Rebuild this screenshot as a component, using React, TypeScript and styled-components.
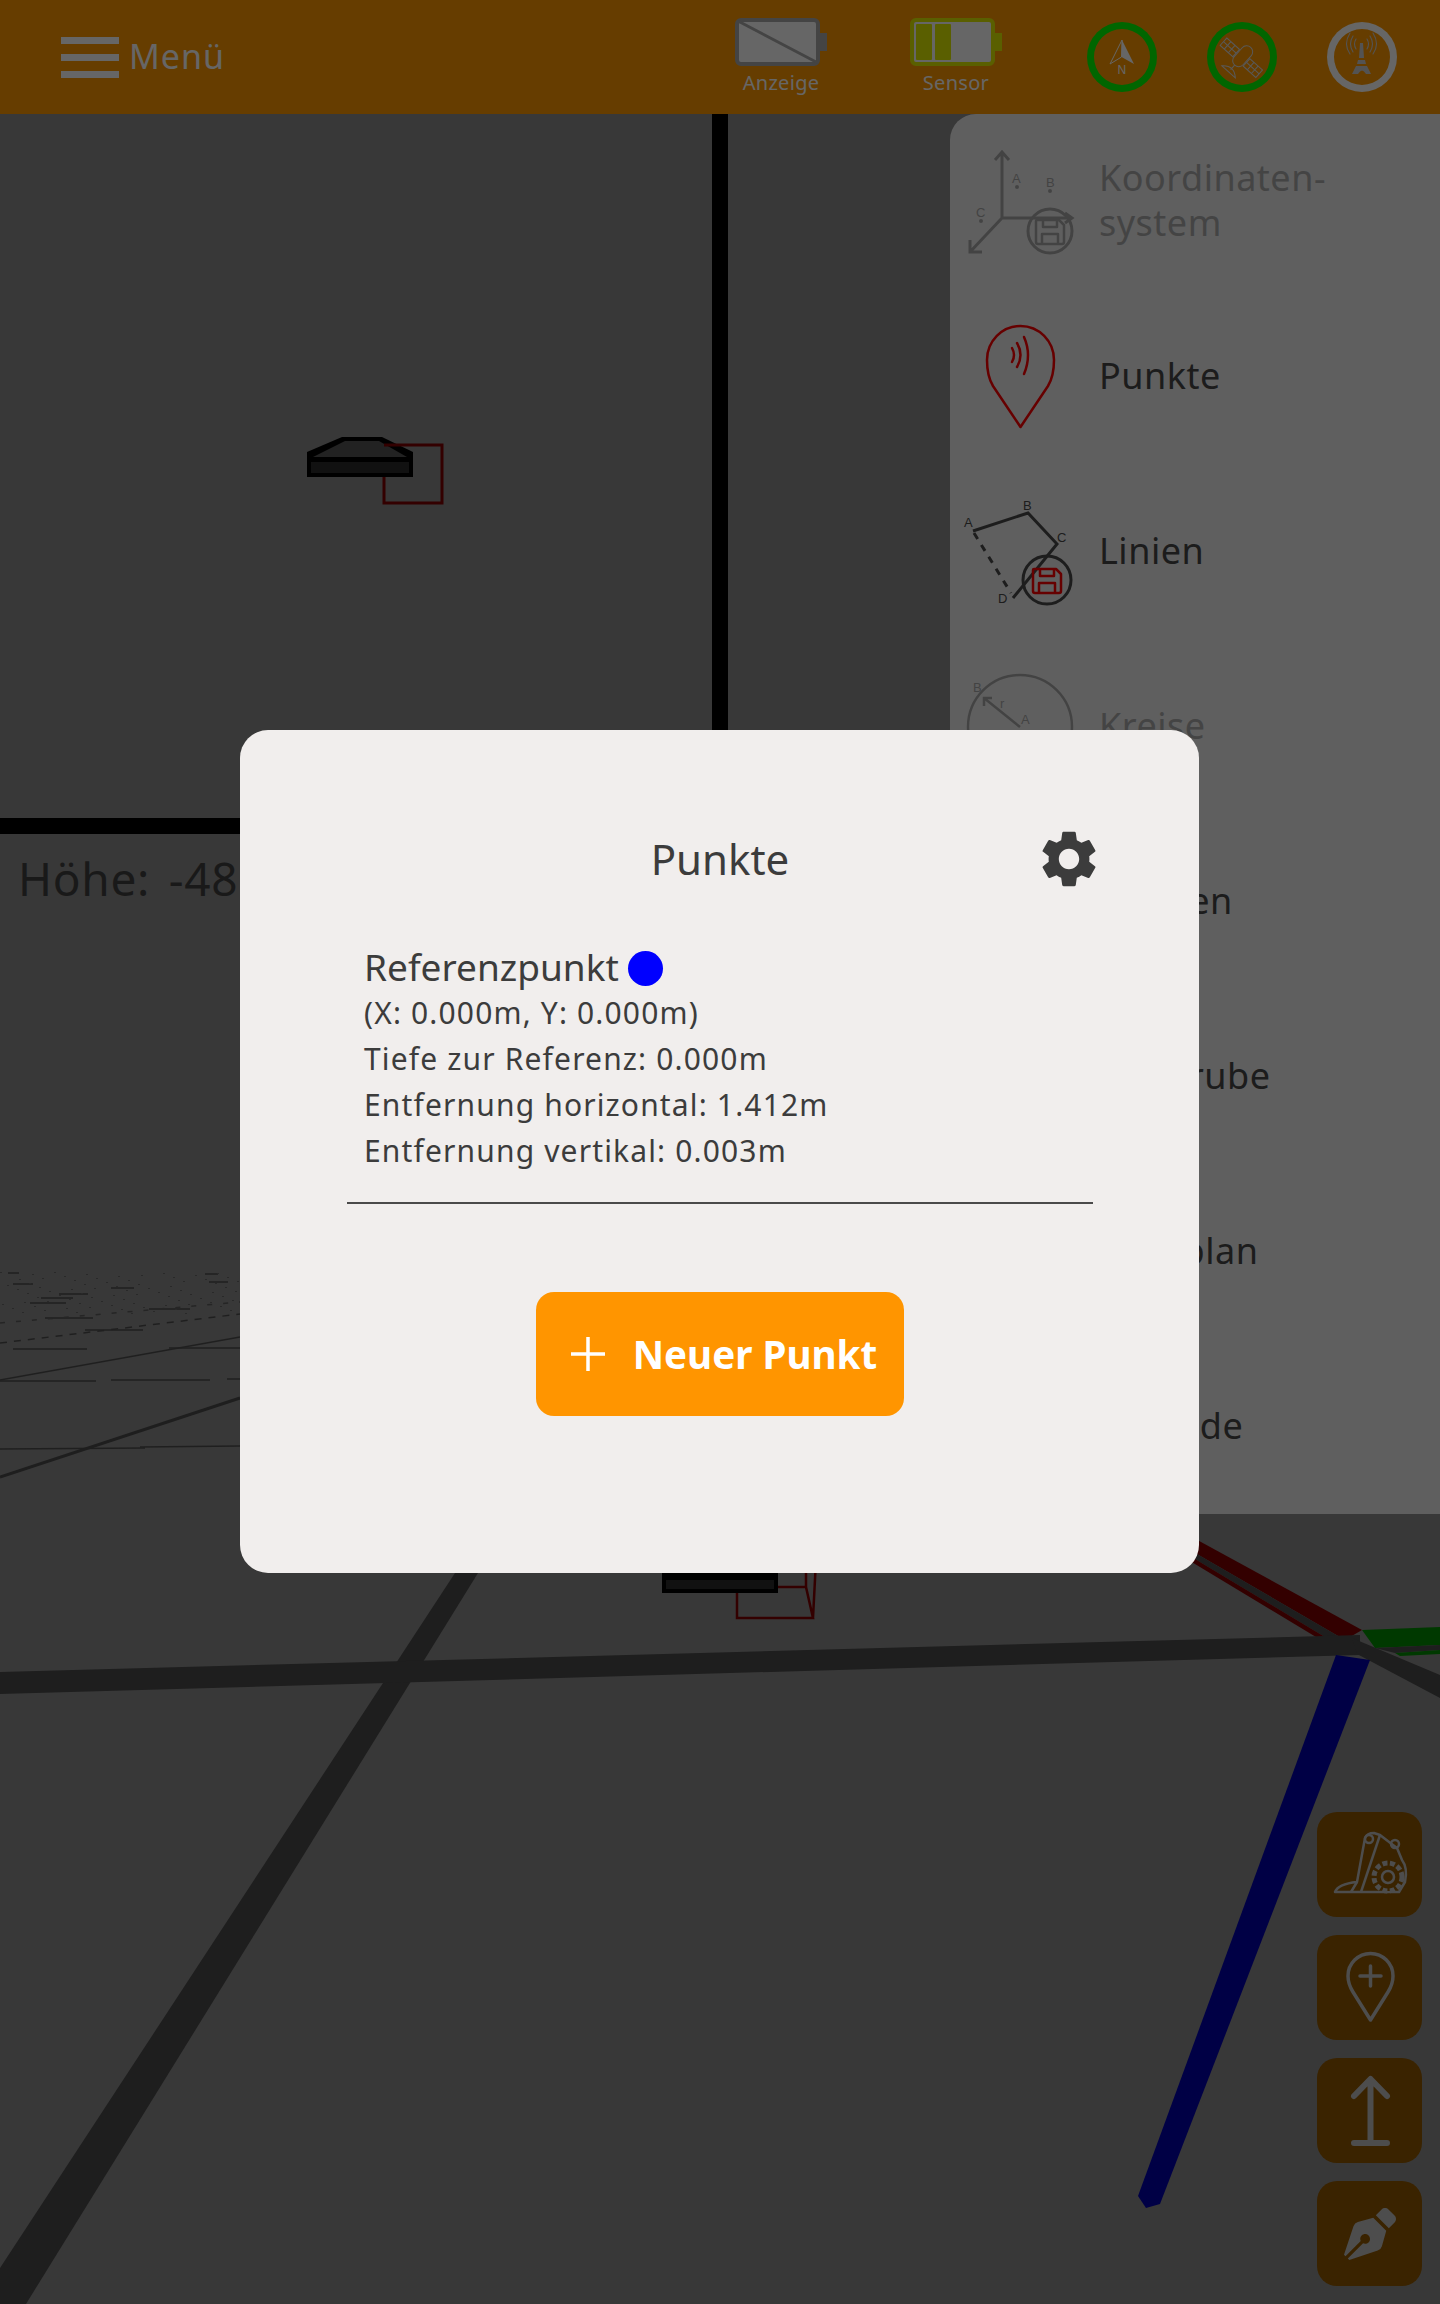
import React from 'react';
import styled, { createGlobalStyle } from 'styled-components';
import { FaPenNib } from 'react-icons/fa';
import { MdSettings } from 'react-icons/md';

const FONT = '"Noto Sans", "Open Sans", sans-serif';

const GlobalStyle = createGlobalStyle`
  html, body {
    margin: 0;
    padding: 0;
    background: #8c8c8c;
    font-family: ${FONT};
  }
  * {
    box-sizing: border-box;
  }
`;

// grid lines of the 3d view, given as x1, y1, x2, y2
const GRID_SEGMENTS = [
  [13, 1349, 87, 1349], [0, 1381, 96, 1381], [111, 1380, 210, 1380], [227, 1379, 240, 1379],
  [85, 1330, 143, 1330], [45, 1318, 93, 1318], [149, 1309, 190, 1309], [169, 1348, 240, 1348],
  [0, 1449, 145, 1448], [140, 1447, 240, 1446], [30, 1303, 66, 1303], [41, 1298, 73, 1298],
  [59, 1294, 88, 1294], [111, 1288, 134, 1288], [13, 1284, 33, 1284], [209, 1282, 228, 1282],
  [205, 1274, 218, 1274], [8, 1273, 19, 1273],
];

const GRID_DOTS = Array.from({ length: 80 }, (_, i) => ({
  x: (i * 47) % 240,
  y: 1272 + ((i * 29) % 42),
}));

const Scene = () => (
  <SceneSvg viewBox="0 0 1440 2304">
    <rect x="712" y="114" width="16" height="700" fill="#000" />
    <rect x="0" y="818" width="728" height="16" fill="#000" />

    <polygon points="342,437 382,437 413,452 413,477 307,477 307,452" fill="#000" />
    <polygon points="345,441 379,441 407,457 313,457" fill="#555" />
    <rect x="311" y="462" width="98" height="11" fill="#2b2b2b" />
    <path d="M384 445 H442 V503 H384 V477" fill="none" stroke="#800000" strokeWidth="3" />

    {GRID_SEGMENTS.map(([x1, y1, x2, y2], i) => (
      <line key={i} x1={x1} y1={y1} x2={x2} y2={y2} stroke="#4f4f4f" strokeWidth="1.5" />
    ))}
    {GRID_DOTS.map((dot, i) => (
      <rect key={i} x={dot.x} y={dot.y} width="2" height="1" fill="#666" />
    ))}
    <line x1="0" y1="1323" x2="240" y2="1302" stroke="#5c5c5c" strokeWidth="1.5" strokeDasharray="5 11" />
    <line x1="0" y1="1343" x2="240" y2="1314" stroke="#4f4f4f" strokeWidth="1.5" strokeDasharray="7 7" />
    <line x1="0" y1="1380" x2="240" y2="1337" stroke="#4f4f4f" strokeWidth="1.5" />
    <line x1="0" y1="1477" x2="240" y2="1398" stroke="#4b4b4b" strokeWidth="3" />

    <polygon points="455,1573 478,1573 26,2304 0,2304 0,2268" fill="#4b4b4b" />

    <polygon points="1190,1536 1362,1630 1345,1640 1190,1550" fill="#800000" />
    <polygon points="1190,1550 1345,1640 1330,1640 1190,1556" fill="#4b4b4b" />
    <polygon points="1190,1556 1330,1640 1321,1640 1190,1561" fill="#800000" />
    <polygon points="1362,1630 1440,1627 1440,1645 1375,1648" fill="#009000" />
    <polygon points="1375,1648 1440,1645 1440,1650 1395,1653" fill="#4b4b4b" />
    <polygon points="1395,1653 1440,1650 1440,1654 1400,1656" fill="#009000" />
    <polygon points="0,1672 1360,1635 1360,1655 0,1694" fill="#4b4b4b" />
    <polygon points="1352,1638 1440,1675 1440,1698 1357,1654" fill="#4b4b4b" />
    <polygon points="1336,1655 1370,1660 1160,2204 1146,2208 1138,2196" fill="#0000ac" />

    <rect x="662" y="1560" width="116" height="33" fill="#000" />
    <rect x="666" y="1580" width="108" height="9" fill="#2b2b2b" />
    <path d="M737 1593 V1618 H813 L806 1587 V1560 M813 1618 L816 1560 M778 1587 H806" fill="none" stroke="#800000" strokeWidth="2.5" />
  </SceneSvg>
);

const Floppy = ({ x, y, color }: { x: number; y: number; color: string }) => (
  <g transform={`translate(${x} ${y})`} fill="none" stroke={color} strokeWidth="2.5" strokeLinejoin="round">
    <path d="M-13 -11 H9 L14 -6 V11 Q14 13 12 13 H-12 Q-14 13 -14 11 V-10 Q-14 -11 -13 -11 Z" />
    <path d="M-7 -11 V-4 H7 V-11" />
    <path d="M-8 13 V3 H8 V13" />
  </g>
);

const AxisIcon = () => (
  <IconSvg viewBox="0 0 120 130">
    <g fill="none" stroke="#a8a8a8" strokeWidth="3">
      <path d="M42 15 V81 H112 M35 23 L42 15 L49 23 M105 76 L112 81 L105 86 M42 81 L10 115 M10 103 V115 H22" />
      <ellipse cx="90" cy="94" rx="22" ry="22" />
    </g>
    <Floppy x={90} y={94} color="#a8a8a8" />
    <IconText x="52" y="46" fill="#a8a8a8">A</IconText>
    <IconText x="86" y="50" fill="#a8a8a8">B</IconText>
    <IconText x="16" y="80" fill="#a8a8a8">C</IconText>
    <circle cx="57" cy="50" r="2" fill="#a8a8a8" />
    <circle cx="90" cy="54" r="2" fill="#a8a8a8" />
    <circle cx="21" cy="84" r="2" fill="#a8a8a8" />
  </IconSvg>
);

const PointIcon = () => (
  <IconSvg viewBox="0 0 120 130">
    <g fill="none" stroke="#ff0000" strokeWidth="2.5" strokeLinecap="round">
      <path d="M60.5 115 L33 74 Q27 64 27 48 A33.5 34 0 0 1 94 48 Q94 64 88 74 Z" strokeLinejoin="round" />
      <path d="M52 36 Q56 43 52 50" />
      <path d="M57 31 Q64 43 57 55" />
      <path d="M64 25 Q72 43 64 62" />
    </g>
  </IconSvg>
);

const LineIcon = () => (
  <IconSvg viewBox="0 0 120 130">
    <g fill="none" stroke="#4a4a4a" strokeWidth="3">
      <path d="M13 44 L68 26 L97 57 L53 111" />
      <path d="M14 46 L51 106" strokeDasharray="7 7" />
      <ellipse cx="87" cy="93" rx="24" ry="24" />
    </g>
    <Floppy x={87} y={93} color="#ff0000" />
    <IconText x="4" y="40" fill="#4a4a4a">A</IconText>
    <IconText x="63" y="23" fill="#4a4a4a">B</IconText>
    <IconText x="97" y="55" fill="#4a4a4a">C</IconText>
    <IconText x="38" y="116" fill="#4a4a4a">D</IconText>
  </IconSvg>
);

const CircleIcon = () => (
  <IconSvg viewBox="0 0 120 130">
    <g fill="none" stroke="#a8a8a8" strokeWidth="2.5">
      <circle cx="60" cy="65" r="52" />
      <path d="M60 65 L24 36 M24 44 V36 H32" />
    </g>
    <IconText x="13" y="30" fill="#a8a8a8">B</IconText>
    <IconText x="61" y="62" fill="#a8a8a8">A</IconText>
    <IconText x="40" y="46" fill="#a8a8a8">r</IconText>
  </IconSvg>
);

const MENU_ITEMS = [
  { label: 'Koordinaten-\nsystem', muted: true, icon: <AxisIcon /> },
  { label: 'Punkte', muted: false, icon: <PointIcon /> },
  { label: 'Linien', muted: false, icon: <LineIcon /> },
  { label: 'Kreise', muted: true, icon: <CircleIcon /> },
  { label: 'Flächen', muted: false, icon: null },
  { label: 'Baugrube', muted: false, icon: null },
  { label: 'Lageplan', muted: false, icon: null },
  { label: 'Gelände', muted: false, icon: null },
];

const Battery = ({ color, segments, crossed }: { color: string; segments: number; crossed?: boolean }) => (
  <svg width="92" height="48" viewBox="0 0 92 48">
    <rect x="85" y="15" width="7" height="18" fill={color} />
    <rect x="2" y="2" width="81" height="44" rx="4" fill="#ffffff" stroke={color} strokeWidth="4" />
    {crossed && <line x1="3" y1="3" x2="83" y2="45" stroke={color} strokeWidth="3" />}
    {Array.from({ length: segments }, (_, i) => (
      <rect key={i} x={6 + i * 19} y="6" width="16" height="36" rx="1" fill={color} />
    ))}
  </svg>
);

const CompassIcon = () => (
  <svg width="70" height="70" viewBox="0 0 70 70">
    <polygon points="35,18 23,42 34.5,35" fill="none" stroke="#fff" strokeWidth="1" />
    <polygon points="35,18 47,42 34.5,35" fill="#fff" />
    <SmallSvgText x="30.5" y="52">N</SmallSvgText>
  </svg>
);

const SatelliteIcon = () => (
  <svg width="70" height="70" viewBox="0 0 70 70">
    <g transform="rotate(-48 35 35)" fill="none" stroke="#ddd" strokeWidth="1">
      <rect x="29" y="11" width="10" height="17" />
      <path d="M29 16.5 H39 M29 22 H39 M34 11 V28" />
      <rect x="29" y="42" width="10" height="17" />
      <path d="M29 47.5 H39 M29 53 H39 M34 42 V59" />
      <rect x="24" y="29" width="24" height="12" rx="6" />
      <path d="M24 35 H18 M15 26 Q24 35 15 44 Z" />
    </g>
  </svg>
);

const TowerIcon = () => (
  <svg width="70" height="70" viewBox="0 0 70 70">
    <g fill="none" stroke="#d0d0d0" strokeWidth="1.1" strokeLinecap="round">
      <path d="M29 27 Q26 22 29 17 M26 30 Q21 22 26 14 M23 32 Q16 22 23 11" />
      <path d="M40 27 Q43 22 40 17 M43 30 Q48 22 43 14 M46 32 Q53 22 46 11" />
    </g>
    <path d="M33 21 H36 L37 36 H32 Z M31 38 H38 L39 42 H30 Z M29 44 H40 L44 52 H39 Q35 45 31 52 H25 Z" fill="#d0d0d0" />
  </svg>
);

const App = () => (
  <Screen>
    <GlobalStyle />
    <Header>
      <MenuButton>
        <Burger>
          <BurgerBar />
          <BurgerBar />
          <BurgerBar />
        </Burger>
        Menü
      </MenuButton>
      <StatusGroup>
        <BatteryGroup>
          <BatteryBlock>
            <Battery color="#aaaaaa" segments={0} crossed />
            <BatteryLabel>Anzeige</BatteryLabel>
          </BatteryBlock>
          <BatteryBlock>
            <Battery color="#e0ee00" segments={2} />
            <BatteryLabel>Sensor</BatteryLabel>
          </BatteryBlock>
        </BatteryGroup>
        <RingGroup>
          <StatusRing $color="#00ff00"><CompassIcon /></StatusRing>
          <StatusRing $color="#00ff00"><SatelliteIcon /></StatusRing>
          <StatusRing $color="#ffffff"><TowerIcon /></StatusRing>
        </RingGroup>
      </StatusGroup>
    </Header>

    <Viewport>
      <Scene />
      <HeightReadout>Höhe: -48</HeightReadout>

      <SideMenu>
        {MENU_ITEMS.map(item => (
          <MenuRow key={item.label}>
            <MenuIconSlot>{item.icon}</MenuIconSlot>
            <MenuLabel $muted={item.muted}>{item.label}</MenuLabel>
          </MenuRow>
        ))}
      </SideMenu>

      <ToolColumn>
        <ToolButton>
          <svg width="105" height="105" viewBox="0 0 105 105" fill="none" stroke="#c0c0c0" strokeWidth="2.5" strokeLinejoin="round">
            <path d="M18 80 Q21 72 40 70 L48 26 Q50 21 57 21 L63 23 Q72 30 80 36 L85 48 Q91 56 88 70 L82 80 H18 Z" />
            <path d="M40 70 L34 80 M63 23 L44 80" />
            <circle cx="52" cy="27" r="4" />
            <circle cx="78" cy="32" r="4" />
            <circle cx="71" cy="65" r="14" fill="#915800" strokeDasharray="5 2.5" strokeWidth="5" />
            <circle cx="71" cy="65" r="11" fill="#915800" strokeWidth="0" />
            <circle cx="71" cy="65" r="6" />
          </svg>
        </ToolButton>
        <ToolButton>
          <svg width="105" height="105" viewBox="0 0 105 105" fill="none" stroke="#c0c0c0" strokeWidth="3.5" strokeLinecap="round" strokeLinejoin="round">
            <path d="M53.5 85 L36 57 Q31 49 31 41 A22.5 22.5 0 0 1 76 41 Q76 49 71 57 Z" />
            <path d="M43 41 H64 M53.5 31 V51" />
          </svg>
        </ToolButton>
        <ToolButton>
          <svg width="105" height="105" viewBox="0 0 105 105" fill="none" stroke="#c0c0c0" strokeWidth="6" strokeLinecap="round" strokeLinejoin="round">
            <path d="M53.5 22 V85 M37 38 L53.5 21 L70 38 M37 85 H70" />
          </svg>
        </ToolButton>
        <ToolButton>
          <FaPenNib size={52} color="#c0c0c0" />
        </ToolButton>
      </ToolColumn>
    </Viewport>

    <Overlay>
      <Modal>
        <ModalHeader>
          <ModalTitle>Punkte</ModalTitle>
          <SettingsButton>
            <MdSettings size={68} color="#3c3c3c" />
          </SettingsButton>
        </ModalHeader>
        <PointInfo>
          <PointName>
            Referenzpunkt
            <PointDot />
          </PointName>
          <PointLine>(X: 0.000m, Y: 0.000m)</PointLine>
          <PointLine>Tiefe zur Referenz: 0.000m</PointLine>
          <PointLine>Entfernung horizontal: 1.412m</PointLine>
          <PointLine>Entfernung vertikal: 0.003m</PointLine>
        </PointInfo>
        <Divider />
        <AddButton>
          <svg width="36" height="36" viewBox="0 0 36 36" stroke="#fff" strokeWidth="3.5">
            <path d="M18 1 V35 M1 18 H35" />
          </svg>
          Neuer Punkt
        </AddButton>
      </Modal>
    </Overlay>
  </Screen>
);

const Screen = styled.div`
  position: relative;
  display: flex;
  flex-direction: column;
  width: 1440px;
  height: 2304px;
  overflow: hidden;
  background: #8c8c8c;
`;

const Header = styled.header`
  display: flex;
  align-items: center;
  justify-content: space-between;
  flex: 0 0 114px;
  padding: 0 43px 0 61px;
  background: #ff9900;
`;

const MenuButton = styled.div`
  display: flex;
  align-items: center;
  gap: 10px;
  padding-bottom: 2px;
  font-size: 34px;
  letter-spacing: 1px;
  color: #fff;
`;

const Burger = styled.div`
  display: flex;
  flex-direction: column;
  gap: 10px;
  width: 58px;
  margin-top: 2px;
`;

const BurgerBar = styled.span`
  display: block;
  height: 7px;
  background: #fff;
`;

const StatusGroup = styled.div`
  display: flex;
  align-items: center;
  gap: 85px;
`;

const BatteryGroup = styled.div`
  display: flex;
  gap: 83px;
`;

const BatteryBlock = styled.div`
  display: flex;
  flex-direction: column;
  align-items: center;
  width: 92px;
`;

const BatteryLabel = styled.span`
  margin-bottom: -4px;
  font-size: 20px;
  line-height: 34px;
  letter-spacing: 0.3px;
  color: #fff;
`;

const RingGroup = styled.div`
  display: flex;
  gap: 50px;
`;

const StatusRing = styled.div<{ $color: string }>`
  width: 70px;
  height: 70px;
  border-radius: 50%;
  box-shadow: inset 0 0 0 7px ${props => props.$color};
`;

const Viewport = styled.main`
  position: relative;
  flex: 1;
`;

const SceneSvg = styled.svg`
  position: absolute;
  left: 0;
  top: -114px;
  width: 1440px;
  height: 2304px;
`;

const HeightReadout = styled.div`
  position: absolute;
  left: 18px;
  top: 732px;
  font-size: 46px;
  line-height: 64px;
  letter-spacing: 0.7px;
  word-spacing: 6px;
  color: #404040;
`;

const SideMenu = styled.nav`
  position: absolute;
  top: 0;
  right: 0;
  width: 490px;
  background: #eeeeee;
  border-top-left-radius: 26px;
  border-bottom-left-radius: 26px;
`;

const MenuRow = styled.div`
  display: grid;
  grid-template-columns: 149px 1fr;
  align-items: center;
  height: 175px;
`;

const MenuIconSlot = styled.div`
  display: flex;
  padding-left: 10px;
`;

const IconSvg = styled.svg`
  width: 120px;
  height: 130px;
`;

const IconText = styled.text`
  font-family: "Liberation Sans", sans-serif;
  font-size: 13px;
`;

const SmallSvgText = styled.text`
  font-family: "Liberation Sans", sans-serif;
  font-size: 12px;
  fill: #fff;
`;

const MenuLabel = styled.span<{ $muted: boolean }>`
  padding-bottom: 3px;
  font-size: 36px;
  line-height: 45px;
  letter-spacing: 0.5px;
  white-space: pre-line;
  color: ${props => (props.$muted ? '#aaaaaa' : '#474747')};
`;

const ToolColumn = styled.div`
  position: absolute;
  right: 18px;
  bottom: 18px;
  display: flex;
  flex-direction: column;
  gap: 18px;
`;

const ToolButton = styled.div`
  display: flex;
  align-items: center;
  justify-content: center;
  width: 105px;
  height: 105px;
  border-radius: 20px;
  background: #915800;
`;

const Overlay = styled.div`
  position: absolute;
  inset: 0;
  display: flex;
  align-items: center;
  justify-content: center;
  background: rgba(0, 0, 0, 0.6);
`;

const Modal = styled.section`
  display: flex;
  flex-direction: column;
  width: 959px;
  height: 843px;
  margin: -1px 1px 0 0;
  padding: 95px 106px 0 107px;
  border-radius: 28px;
  background: #f1eeed;
  color: #3c3c3c;
`;

const ModalHeader = styled.div`
  display: grid;
  grid-template-columns: 1fr auto 1fr;
  align-items: center;
  height: 56px;
`;

const ModalTitle = styled.h2`
  grid-column: 2;
  margin: 0;
  font-size: 42px;
  font-weight: 400;
  line-height: 56px;
`;

const SettingsButton = styled.div`
  display: flex;
  justify-self: end;
  margin-right: -10px;
`;

const PointInfo = styled.div`
  display: flex;
  flex-direction: column;
  margin-top: 62px;
  padding-left: 17px;
`;

const PointName = styled.div`
  display: flex;
  align-items: center;
  gap: 9px;
  font-size: 37px;
  line-height: 47px;
`;

const PointDot = styled.span`
  width: 35px;
  height: 35px;
  border-radius: 50%;
  margin-top: 3px;
  background: #0000ff;
`;

const PointLine = styled.div`
  font-size: 30px;
  line-height: 46px;
  letter-spacing: 1.15px;
`;

const Divider = styled.hr`
  width: 100%;
  height: 2px;
  margin: 28px 0 0;
  border: 0;
  background: #4a4a4a;
`;

const AddButton = styled.div`
  display: flex;
  align-items: center;
  align-self: center;
  gap: 27px;
  height: 124px;
  margin-top: 88px;
  padding: 0 27px 0 34px;
  border-radius: 18px;
  background: #ff9500;
  font-size: 38.6px;
  font-weight: 700;
  color: #fff;
`;

export default App;
